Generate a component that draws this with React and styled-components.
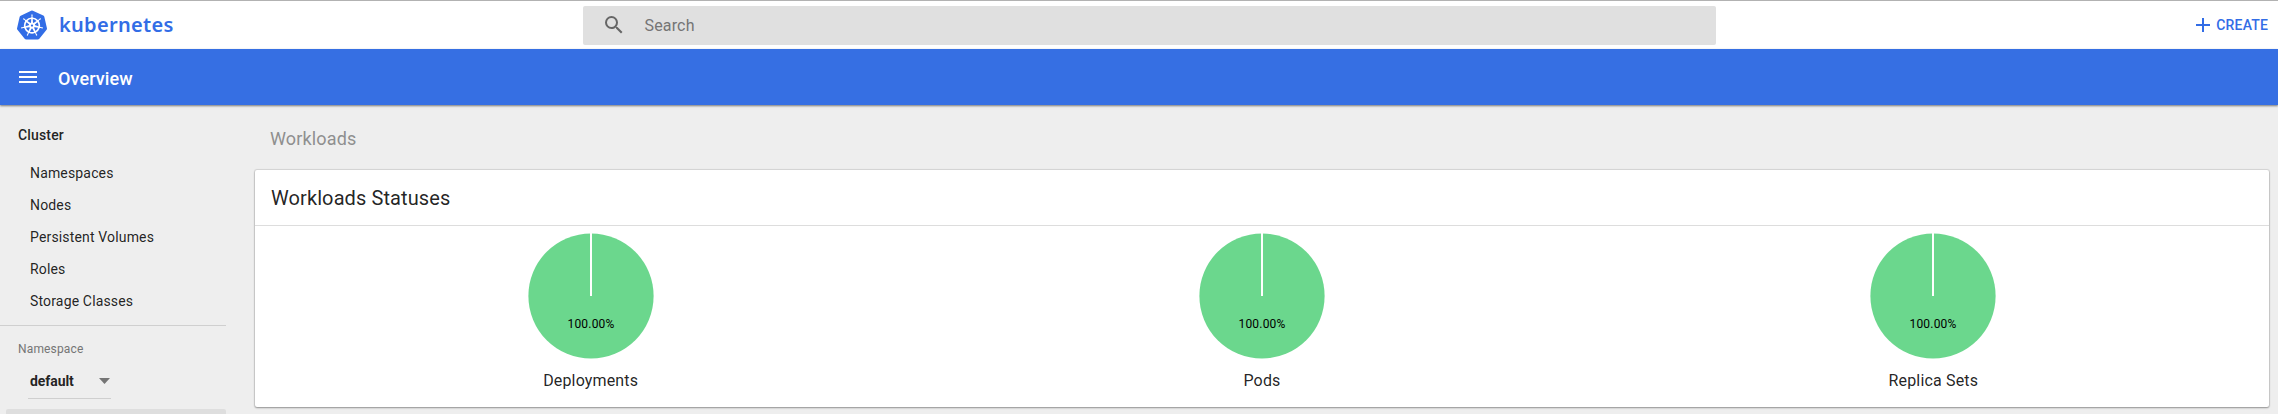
import React from "react";
import styled, { createGlobalStyle } from "styled-components";
import { SiKubernetes } from "react-icons/si";
import { MdSearch, MdMenu } from "react-icons/md";

const GlobalStyle = createGlobalStyle`
  * { box-sizing: border-box; }
  body {
    margin: 0;
    background: #eee;
    color: rgba(0, 0, 0, 0.87);
    font-family: Roboto, "Liberation Sans", sans-serif;
    letter-spacing: 0.01em;
  }
`;

const Page = styled.div`
  height: 414px;
  overflow: hidden;
  display: flex;
  flex-direction: column;
`;

const TopBar = styled.header`
  height: 49px;
  flex: none;
  display: grid;
  grid-template-columns: 583px 1133px 1fr;
  align-items: center;
  background: #fff;
  border-top: 1px solid #b2b2b2;
`;

const Brand = styled.div`
  display: flex;
  align-items: center;
  gap: 12px;
  padding-left: 17px;
  color: #326de6;
`;

const BrandName = styled.span`
  font: 600 20px/24px "Noto Sans", sans-serif;
  letter-spacing: 0.3px;
`;

const SearchBox = styled.div`
  height: 39px;
  display: flex;
  align-items: center;
  padding-left: 19px;
  gap: 18.5px;
  border-radius: 2px;
  background: #e0e0e0;
  color: #757575;
  font-size: 16px;

  svg { color: #666; }
`;

const CreateButton = styled.div`
  display: flex;
  align-items: center;
  justify-content: flex-end;
  gap: 6.5px;
  padding-right: 10px;
  color: #326de6;
  font-size: 14px;
  font-weight: 500;
`;

const ActionBar = styled.div`
  height: 56px;
  flex: none;
  display: flex;
  align-items: center;
  gap: 18px;
  padding-left: 16px;
  position: relative;
  background: #366fe3;
  color: #fff;
  box-shadow: 0 1px 2px rgba(0, 0, 0, 0.5);
`;

const ActionTitle = styled.h1`
  margin: 0;
  font-size: 18px;
  line-height: 24px;
  font-weight: 500;
  letter-spacing: 0.1px;
  padding-top: 4px;
`;

const Body = styled.div`
  flex: 1;
  min-height: 0;
  display: flex;
`;

const Sidebar = styled.nav`
  width: 226px;
  flex: none;
`;

const GroupTitle = styled.div`
  padding: 20px 0 12px 18px;
  font-size: 14px;
  line-height: 20px;
  font-weight: 500;
`;

const NavItem = styled.div`
  height: 32px;
  padding-left: 30px;
  font-size: 14px;
  line-height: 32px;
  letter-spacing: 0.16px;
`;

const Divider = styled.div`
  height: 1px;
  margin-top: 8px;
  background: #cfcfcf;
`;

const FieldLabel = styled.div`
  padding: 13px 0 0 18px;
  font-size: 12px;
  line-height: 20px;
  color: #757575;
`;

const Select = styled.div`
  width: 83px;
  height: 40px;
  margin-left: 28px;
  padding: 5px 1px 0 2px;
  display: flex;
  align-items: center;
  justify-content: space-between;
  border-bottom: 1px solid #cfcfcf;
  font-size: 14px;
  font-weight: 700;
  letter-spacing: -0.08px;
`;

const ActiveItem = styled.div`
  height: 40px;
  margin: 10px 0 0 6px;
  border-radius: 2px;
  background: #dedede;
`;

const Main = styled.main`
  flex: 1;
  padding: 0 9px 0 29px;
`;

const SectionTitle = styled.h2`
  margin: 0;
  height: 65px;
  padding: 22px 0 0 15px;
  font-size: 18px;
  line-height: 24px;
  font-weight: 400;
  color: #8f8f8f;
`;

const Card = styled.section`
  height: 237px;
  border-radius: 2px;
  background: #fff;
  box-shadow: 0 0 1px 1px rgba(0, 0, 0, 0.1), 0 1px 2px rgba(0, 0, 0, 0.32);
`;

const CardTitle = styled.h3`
  margin: 0;
  height: 56px;
  padding: 16px 0 0 16px;
  border-bottom: 1px solid #ddd;
  font-size: 20px;
  line-height: 24px;
  font-weight: 400;
  letter-spacing: 0.1px;
`;

const Charts = styled.div`
  display: grid;
  grid-template-columns: repeat(3, 1fr);
`;

const Chart = styled.figure`
  margin: 0;
  padding-top: 7px;
  display: flex;
  flex-direction: column;
  align-items: center;
`;

const ChartLabel = styled.figcaption`
  margin-top: 10px;
  font-size: 16px;
  line-height: 24px;
`;

const PieSvg = styled.svg`
  display: block;

  text {
    font-size: 12px;
    letter-spacing: 0.2px;
  }
`;

const Pie = () => (
  <PieSvg width="126" height="126" viewBox="0 0 126 126">
    <circle cx="63" cy="63" r="62.6" fill="#6bd78d" />
    <path d="M63 0V63" stroke="#fff" strokeWidth="2" />
    <text x="63" y="95" textAnchor="middle">100.00%</text>
  </PieSvg>
);

const links = ["Namespaces", "Nodes", "Persistent Volumes", "Roles", "Storage Classes"];
const statuses = ["Deployments", "Pods", "Replica Sets"];

export default function App() {
  return (
    <Page>
      <GlobalStyle />
      <TopBar>
        <Brand>
          <SiKubernetes size={30} />
          <BrandName>kubernetes</BrandName>
        </Brand>
        <SearchBox>
          <MdSearch size={24} />
          Search
        </SearchBox>
        <CreateButton>
          <svg width="14" height="14" viewBox="0 0 14 14" stroke="currentColor" strokeWidth="2">
            <path d="M0 7H14M7 0V14" />
          </svg>
          CREATE
        </CreateButton>
      </TopBar>
      <ActionBar>
        <MdMenu size={24} />
        <ActionTitle>Overview</ActionTitle>
      </ActionBar>
      <Body>
        <Sidebar>
          <GroupTitle>Cluster</GroupTitle>
          {links.map((link) => (
            <NavItem key={link}>{link}</NavItem>
          ))}
          <Divider />
          <FieldLabel>Namespace</FieldLabel>
          <Select>
            default
            <svg width="11" height="6" viewBox="0 0 11 6" fill="#757575">
              <path d="M0 0H11L5.5 6Z" />
            </svg>
          </Select>
          <ActiveItem />
        </Sidebar>
        <Main>
          <SectionTitle>Workloads</SectionTitle>
          <Card>
            <CardTitle>Workloads Statuses</CardTitle>
            <Charts>
              {statuses.map((status) => (
                <Chart key={status}>
                  <Pie />
                  <ChartLabel>{status}</ChartLabel>
                </Chart>
              ))}
            </Charts>
          </Card>
        </Main>
      </Body>
    </Page>
  );
}
